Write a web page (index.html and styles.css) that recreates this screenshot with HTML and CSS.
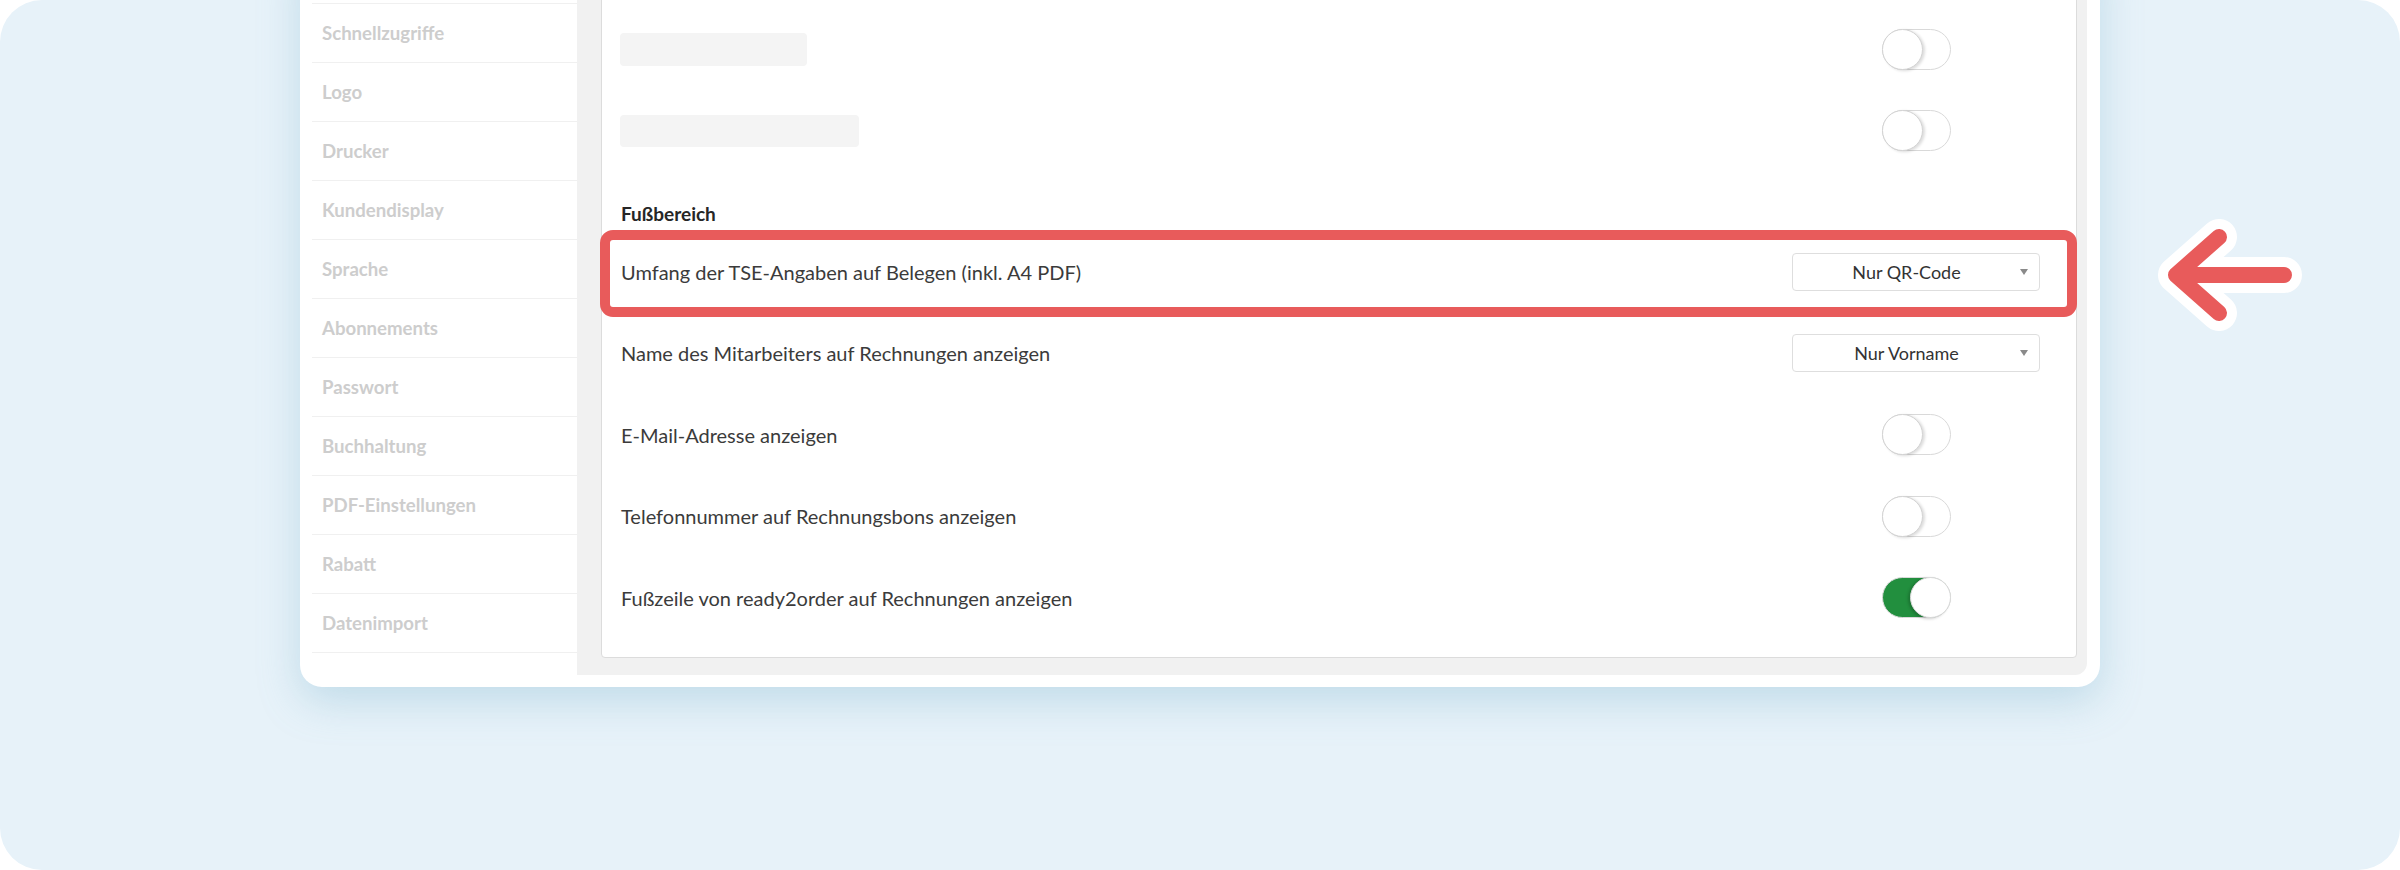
FILE: index.html
```html
<!DOCTYPE html>
<html lang="de">
<head>
  <meta charset="UTF-8" />
  <title>Einstellungen – Fußbereich</title>
  <link rel="stylesheet" href="styles.css">
</head>
<body>
  <div class="frame">
    <div class="card">
      <!-- Seitenleiste -->
      <ul class="sidebar">
        <li class="hidden-item"></li>
        <li>Schnellzugriffe</li>
        <li>Logo</li>
        <li>Drucker</li>
        <li>Kundendisplay</li>
        <li>Sprache</li>
        <li>Abonnements</li>
        <li>Passwort</li>
        <li>Buchhaltung</li>
        <li>PDF-Einstellungen</li>
        <li>Rabatt</li>
        <li>Datenimport</li>
      </ul>

      <div class="content">
        <div class="panel">
          <div class="row">
            <div class="row-label"><span class="skeleton skeleton-short"></span></div>
            <div class="row-control"><span class="toggle"><span class="knob"></span></span></div>
          </div>
          <div class="row">
            <div class="row-label"><span class="skeleton skeleton-long"></span></div>
            <div class="row-control"><span class="toggle"><span class="knob"></span></span></div>
          </div>

          <h3 class="section-title">Fußbereich</h3>

          <div class="row row-footer highlighted">
            <div class="row-label">Umfang der TSE-Angaben auf Belegen (inkl. A4 PDF)</div>
            <div class="row-control">
              <div class="select"><span class="select-value">Nur QR-Code</span><span class="caret"></span></div>
            </div>
          </div>
          <div class="row row-footer">
            <div class="row-label">Name des Mitarbeiters auf Rechnungen anzeigen</div>
            <div class="row-control">
              <div class="select"><span class="select-value">Nur Vorname</span><span class="caret"></span></div>
            </div>
          </div>
          <div class="row row-footer">
            <div class="row-label">E-Mail-Adresse anzeigen</div>
            <div class="row-control"><span class="toggle"><span class="knob"></span></span></div>
          </div>
          <div class="row row-footer">
            <div class="row-label">Telefonnummer auf Rechnungsbons anzeigen</div>
            <div class="row-control"><span class="toggle"><span class="knob"></span></span></div>
          </div>
          <div class="row row-footer">
            <div class="row-label">Fußzeile von ready2order auf Rechnungen anzeigen</div>
            <div class="row-control"><span class="toggle on"><span class="knob"></span></span></div>
          </div>
        </div>
      </div>
    </div>

    <!-- Hinweispfeil -->
    <svg class="pointer" width="160" height="120" viewBox="0 0 160 120">
      <path d="M69 22 L26 60 L69 98 M26 60 L134 60" fill="none" stroke="#fff" stroke-width="36" stroke-linecap="round" stroke-linejoin="round"/>
      <path d="M69 22 L26 60 L69 98 M26 60 L134 60" fill="none" stroke="#e85b5b" stroke-width="16" stroke-linecap="round" stroke-linejoin="round"/>
    </svg>
  </div>
</body>
</html>
```

FILE: styles.css
```css
body {
  margin: 0;
  background: #fff;
  font-family: Lato, "Open Sans", sans-serif;
}
.frame {
  position: relative;
  width: 2400px;
  height: 870px;
  background: #e7f2f9;
  border-radius: 42px;
  overflow: hidden;
  padding-left: 300px;
  box-sizing: border-box;
}
.card {
  width: 1800px;
  margin-top: -55px;
  background: #fff;
  border-radius: 22px;
  padding: 0 13px 12px 0;
  box-sizing: border-box;
  display: flex;
  box-shadow: 0 14px 40px rgba(120, 178, 204, 0.35);
}

/* Seitenleiste */
.sidebar {
  list-style: none;
  margin: 0 0 0 12px;
  padding: 0;
  width: 265px;
  flex: none;
}
.sidebar li {
  height: 58px;
  line-height: 58px;
  padding-left: 10px;
  border-bottom: 1px solid #f0f0f0;
  color: #cdcdcd;
  font-weight: bold;
  font-size: 18.6px;
}

/* Inhalt */
.content {
  flex: 1;
  background: #f1f1f1;
  border-radius: 0 0 12px 0;
  padding: 15px 10px 17px 24px;
}
.panel {
  background: #fff;
  border: 1px solid #dcdcdc;
  border-radius: 4px;
  padding: 48px 0 18px;
}
.row {
  position: relative;
  display: flex;
  align-items: center;
  height: 81px;
  padding-left: 19px;
}
.row-footer {
  height: 81.5px;
}
.row-label {
  flex: 1;
  font-size: 20px;
  color: #3b3b3b;
}
.row-control {
  width: 248px;
  margin-right: 36px;
  display: flex;
  justify-content: center;
}
.section-title {
  margin: 0;
  height: 60px;
  box-sizing: border-box;
  padding: 32px 0 0 19px;
  line-height: 22px;
  font-size: 19px;
  font-weight: bold;
  color: #262626;
}

/* Platzhalter */
.skeleton {
  display: block;
  height: 33px;
  background: #f4f4f4;
  border-radius: 4px;
  margin-left: -1px;
}
.skeleton-short {
  width: 187px;
}
.skeleton-long {
  width: 239px;
  height: 32px;
}

/* Schalter */
.toggle {
  display: flex;
  width: 69px;
  height: 41px;
  box-sizing: border-box;
  border: 1px solid #d9d9d9;
  border-radius: 21px;
  background: #fff;
}
.knob {
  width: 41px;
  height: 41px;
  margin: -1px;
  box-sizing: border-box;
  border: 1px solid #d3d3d3;
  border-radius: 50%;
  background: #fff;
  box-shadow: 2px 1px 3px rgba(0, 0, 0, 0.14);
}
.toggle.on {
  justify-content: flex-end;
  background: #228f3e;
  border-color: #d9d9d9;
}
.toggle.on .knob {
  border-color: #dadada;
  box-shadow: -2px 1px 3px rgba(0, 0, 0, 0.2);
}

/* Auswahlfeld */
.select {
  display: flex;
  align-items: center;
  width: 248px;
  height: 38px;
  box-sizing: border-box;
  border: 1px solid #dedede;
  border-radius: 4px;
  background: #fff;
}
.select-value {
  flex: 1;
  text-align: center;
  font-size: 18px;
  color: #333;
}
.caret {
  width: 0;
  height: 0;
  border-left: 4.5px solid transparent;
  border-right: 4.5px solid transparent;
  border-top: 6px solid #8a8a8a;
  margin-right: 11px;
}

/* Markierung */
.highlighted::after {
  content: "";
  position: absolute;
  top: -1px;
  bottom: -4px;
  left: -2px;
  right: -1px;
  border: 10px solid #e85b5b;
  border-radius: 13px;
  pointer-events: none;
}
.pointer {
  position: absolute;
  left: 2150px;
  top: 215px;
}
```
